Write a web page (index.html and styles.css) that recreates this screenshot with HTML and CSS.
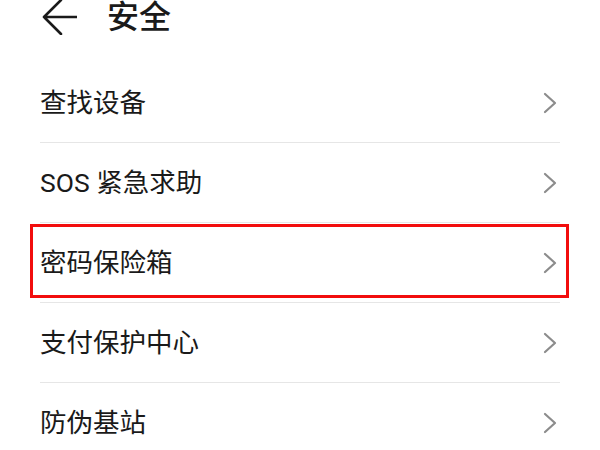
FILE: index.html
```html
<!DOCTYPE html>
<html>
<head>
    <title>安全</title>
    <link rel="stylesheet" href="styles.css">
</head>
<body>
    <div class="header">
        <svg class="back" width="36" height="36" viewBox="0 0 36 36">
            <path d="M20 1 L3 18 L20 35 M3 18 L36 18" fill="none" stroke="#1a1a1a" stroke-width="2.6" stroke-linecap="round" stroke-linejoin="round"/>
        </svg>
        <h1>安全</h1>
    </div>

    <div class="list">
        <div class="row">
            <span class="label">查找设备</span>
            <svg class="chevron" width="16" height="22" viewBox="0 0 16 22"><polyline points="3,2 13,11 3,20" fill="none" stroke="#8c8c8c" stroke-width="2.2" stroke-linecap="round" stroke-linejoin="round"/></svg>
        </div>
        <div class="row">
            <span class="label">SOS 紧急求助</span>
            <svg class="chevron" width="16" height="22" viewBox="0 0 16 22"><polyline points="3,2 13,11 3,20" fill="none" stroke="#8c8c8c" stroke-width="2.2" stroke-linecap="round" stroke-linejoin="round"/></svg>
        </div>
        <div class="row selected">
            <span class="label">密码保险箱</span>
            <svg class="chevron" width="16" height="22" viewBox="0 0 16 22"><polyline points="3,2 13,11 3,20" fill="none" stroke="#8c8c8c" stroke-width="2.2" stroke-linecap="round" stroke-linejoin="round"/></svg>
            <div class="mark"></div>
        </div>
        <div class="row">
            <span class="label">支付保护中心</span>
            <svg class="chevron" width="16" height="22" viewBox="0 0 16 22"><polyline points="3,2 13,11 3,20" fill="none" stroke="#8c8c8c" stroke-width="2.2" stroke-linecap="round" stroke-linejoin="round"/></svg>
        </div>
        <div class="row">
            <span class="label">防伪基站</span>
            <svg class="chevron" width="16" height="22" viewBox="0 0 16 22"><polyline points="3,2 13,11 3,20" fill="none" stroke="#8c8c8c" stroke-width="2.2" stroke-linecap="round" stroke-linejoin="round"/></svg>
        </div>
    </div>
</body>
</html>
```

FILE: styles.css
```css
body { margin: 0; background: #fff; font-family: Roboto, "Noto Sans CJK SC", sans-serif; color: #1a1a1a; overflow: hidden; }
.header { display: flex; align-items: center; height: 34px; padding-left: 41px; }
.back { display: block; }
.header h1 { margin: 0 0 0 30px; font-size: 32px; font-weight: 500; line-height: 34px; }
.list { padding: 29px 40px 0 40px; }
.row { position: relative; display: flex; align-items: center; justify-content: space-between; height: 79px; border-bottom: 1px solid #e6e6e6; }
.label { font-size: 26.5px; line-height: 34px; }
.chevron { display: block; margin-right: 2px; }
.mark { position: absolute; top: 1px; bottom: 4px; left: -10px; right: -9px; border: 3px solid #f20d0d; }
```
